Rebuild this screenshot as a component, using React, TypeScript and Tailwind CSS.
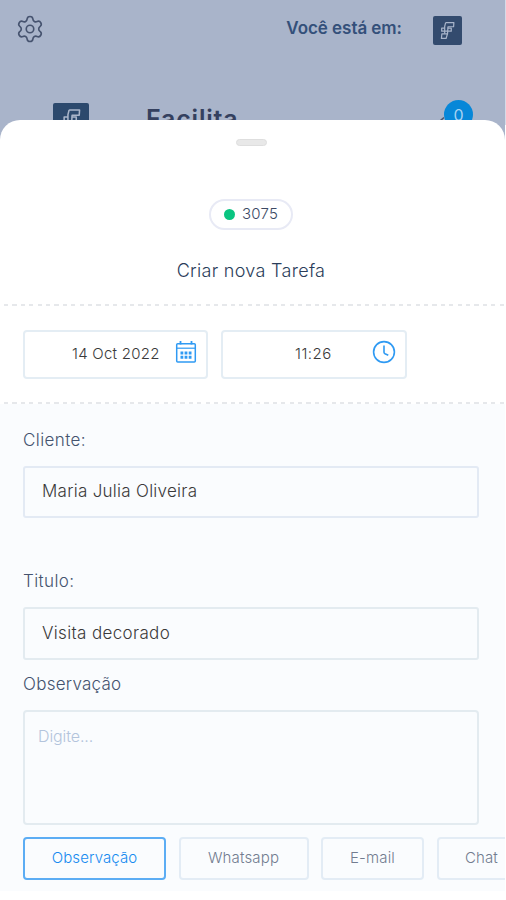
import { useState } from "react";
import clsx from "clsx";
import { Settings } from "lucide-react";

const NOTE_TYPES = [
  { label: "Observação", size: "w-[143px]", text: "tracking-[0.1px]" },
  { label: "Whatsapp", size: "w-[130px]", text: "tracking-[0.15px]" },
  { label: "E-mail", size: "w-[103px]", text: "tracking-[0.15px]" },
  { label: "Chat", size: "w-[90px]", text: "tracking-[0.1px]" },
];

function LogoMark({ className }: { className?: string }) {
  return (
    <svg viewBox="0 0 16 20" className={className} fill="none" stroke="#a9b5ca" strokeWidth="1.3" strokeLinejoin="round">
      <path d="M6 1.500h8.800l-.3 4.500H8.500L8 14" />
      <path d="M6 1.500L5 5.500v8M5 7.500H1.800v3.200H12V7.500H8.300" />
      <path d="M8 13.500H2l-.5 5h5L8 13.500" />
    </svg>
  );
}

function CalendarIcon() {
  return (
    <svg viewBox="0 0 22 24" className="h-6 w-[22px]" fill="none" stroke="#2f9af3" strokeWidth="1.500">
      <rect x="1.700" y="3.700" width="18.600" height="18.300" rx="1" />
      <path d="M1.700 8.200h18.600" strokeWidth="1.200" />
      <path d="M5.500 1v3.500M16.500 1v3.500" strokeWidth="1.800" />
      <path d="M5.500 13h11M5.500 17.200h11" strokeWidth="3" strokeDasharray="2.800 1.300" />
    </svg>
  );
}

function ClockIcon() {
  return (
    <svg viewBox="0 0 24 24" className="h-6 w-6" fill="none" stroke="#2f9af3" strokeWidth="1.600">
      <circle cx="12" cy="12" r="10.400" />
      <path d="M12 5.500v6.800q0 1 1 1.500l3.300 1.400" />
    </svg>
  );
}

function DashedLine() {
  return (
    <div className="ml-1 h-[2px] shrink-0 bg-[repeating-linear-gradient(90deg,#e6e8eb_0px,#e6e8eb_4.200px,transparent_4.200px,transparent_8.400px)]" />
  );
}

export default function App() {
  const [active, setActive] = useState("Observação");

  return (
    <div className="h-[900px] w-[506px] overflow-hidden bg-[linear-gradient(#d5dbe8_0_125px,#fff_125px)] font-['Inter','Liberation_Sans',sans-serif]">
      <div className="h-full w-[505px] overflow-hidden bg-[linear-gradient(#a9b4ca_0_160px,#fff_160px)]">
        {/* Dimmed header behind the sheet */}
        <header className="h-[120px] overflow-hidden">
          <div className="flex h-[60px] items-center pl-[15px] pr-[43px]">
            <Settings className="-mt-[3px] h-[30px] w-[30px] text-[#46536f]" strokeWidth={1.3} />
            <span className="ml-auto mr-[31px] -mt-[2px] text-[17px] font-semibold tracking-[-0.05px] text-[#34507a]">
              Você está em:
            </span>
            <div className="flex h-[29px] w-[29px] items-center justify-center rounded-[2px] bg-[#334b6e]">
              <LogoMark className="h-[19px] w-[15px]" />
            </div>
          </div>
          <div className="flex pl-[53px] pr-8 pt-10">
            <div className="mt-[3px] flex h-9 w-9 justify-center rounded-[2px] bg-[#2c496d] pt-[5px]">
              <LogoMark className="h-[24px] w-[19px]" />
            </div>
            <span className="ml-[57px] mt-[3px] text-[25px] leading-[32px] font-semibold tracking-[0.8px] text-[#34405f]">
              Facilita
            </span>
            <div className="ml-auto flex">
              <svg viewBox="0 0 12 12" className="mt-[16px] -mr-1 h-3 w-3" fill="none" stroke="#4c566c" strokeWidth="1.600">
                <path d="M4 5 L8 1.500" />
              </svg>
              <span className="flex h-[29px] w-[29px] items-center justify-center rounded-full bg-[#0787d8] text-[16px] text-[#a7d2f2]">
                0
              </span>
            </div>
          </div>
        </header>

        <main className="flex h-[780px] flex-col rounded-t-[20px] bg-white">
          <div className="flex h-[184px] shrink-0 flex-col items-center pt-[19px] pr-[3px]">
            <div className="h-[7px] w-[31px] rounded-full border border-[#dedede] bg-[#e8e8e8]" />
            <div className="mt-[53px] flex h-[31px] w-[84px] items-center justify-center gap-[7px] rounded-full border-2 border-[#e8eaf5]">
              <span className="h-[11px] w-[11px] rounded-full bg-[#0ac581]" />
              <span className="text-[15px] font-light tracking-[0.200px] text-[#3c4964]">3075</span>
            </div>
            <h1 className="mt-[27px] text-[18px] leading-7 font-light tracking-[0.300px] text-[#2b3d5a]">
              Criar nova Tarefa
            </h1>
          </div>

          <DashedLine />

          <div className="flex gap-[13px] pl-[23px] pt-6 pb-[23px]">
            <div className="flex h-[49px] w-[185px] items-center rounded-[4px] border-2 border-[#e4edf4] pl-[47px] pr-[9px]">
              <span className="text-[15px] font-light tracking-[0.250px] text-[#3a3a3a]">14 Oct 2022</span>
              <span className="ml-auto -mt-[6px]">
                <CalendarIcon />
              </span>
            </div>
            <div className="flex h-[49px] w-[186px] items-center rounded-[4px] border-2 border-[#e4edf4] pl-[72px] pr-[9px]">
              <span className="text-[15px] font-light tracking-[0.500px] text-[#3a3a3a]">11:26</span>
              <span className="ml-auto -mt-[6px]">
                <ClockIcon />
              </span>
            </div>
          </div>

          <DashedLine />

          <div className="flex h-[487px] shrink-0 flex-col overflow-hidden bg-[#fafcfe] pl-[23px]">
            <label className="mt-6 text-[17px] leading-6 font-light tracking-[0.400px] text-[#44536e]">Cliente:</label>
            <div className="mt-[14px] flex h-[52px] w-[456px] shrink-0 items-center rounded-[3px] border-2 border-[#e3eaf4] pl-[17px] text-[17px] font-light tracking-[0.270px] text-[#3a3a3a]">
              Maria Julia Oliveira
            </div>

            <label className="mt-[51px] text-[17px] leading-6 font-light tracking-[0.400px] text-[#44536e]">Titulo:</label>
            <div className="mt-[14px] flex h-[53px] w-[456px] shrink-0 items-center rounded-[3px] border-2 border-[#e3ebf0] pl-[17px] text-[17px] font-light tracking-[0.350px] text-[#3a3a3a]">
              Visita decorado
            </div>

            <label className="mt-[12px] text-[17px] leading-6 font-light tracking-[0.250px] text-[#44536e]">Observação</label>
            <div className="mt-[14px] h-[115px] w-[456px] shrink-0 rounded-[4px] border-2 border-[#e3ebf0] pl-[13px] pt-[12px] text-[16px] leading-6 font-light tracking-[-0.100px] text-[#b3c4dc]">
              Digite...
            </div>

            <div className="mt-3 flex gap-[12.500px]">
              {NOTE_TYPES.map((type) => (
                <button
                  key={type.label}
                  onClick={() => setActive(type.label)}
                  className={clsx(
                    "h-[43px] shrink-0 rounded-[4px] border-2 text-[15px] font-light",
                    type.size,
                    type.text,
                    active === type.label ? "border-[#5cadf4] text-[#168bf0]" : "border-[#e3ecf5] text-[#727c90]"
                  )}
                >
                  {type.label}
                </button>
              ))}
            </div>
          </div>
        </main>
      </div>
    </div>
  );
}
